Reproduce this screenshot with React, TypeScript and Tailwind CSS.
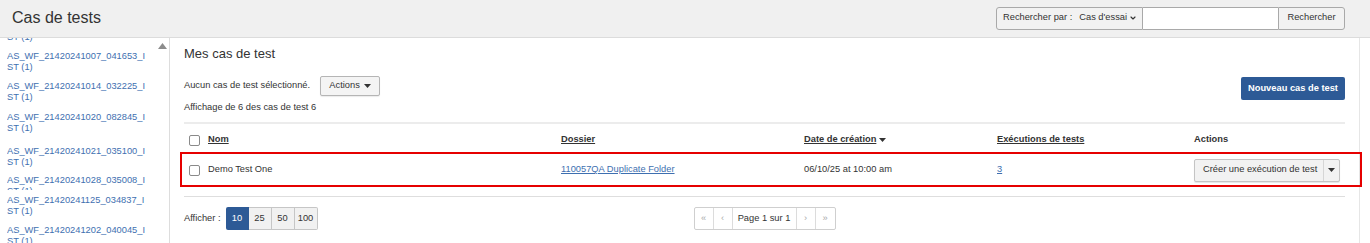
import { ChevronDown } from "lucide-react";

const folders = [
  { l1: "AS_WF_21420241007_041653_I", cls: "mt-[8px] h-[22px]" },
  { l1: "AS_WF_21420241014_032225_I", cls: "mt-[8px] h-[22px]" },
  { l1: "AS_WF_21420241020_082845_I", cls: "mt-[9px] h-[22px]" },
  { l1: "AS_WF_21420241021_035100_I", cls: "mt-[12px] h-[22px]" },
  { l1: "AS_WF_21420241028_035008_I", cls: "mt-[7px] h-[15px]" },
  { l1: "AS_WF_21420241125_034837_I", cls: "mt-[5px] h-[22px]" },
  { l1: "AS_WF_21420241202_040045_I", cls: "mt-[8px] h-[22px]" },
];

const Checkbox = () => (
  <span className="block w-[11px] h-[11px] border border-[#8a8a8a] rounded-[2px] bg-white" />
);

const Caret = () => (
  <svg width="7" height="4" viewBox="0 0 7 4" className="fill-[#333]">
    <path d="M0 0h7L3.5 4z" />
  </svg>
);

const App = () => {
  return (
    <div className="w-[1370px] h-[243px] overflow-hidden bg-white text-[#333] font-['Liberation_Sans',Arial,sans-serif] text-[9.3px]">
      <header className="h-[38px] bg-[#f0f0f0] border-b border-[#dcdcdc] flex items-center justify-between pl-[12px] pr-[25px]">
        <h1 className="text-[16px] leading-none text-[#333] -mt-[1px]">Cas de tests</h1>
        <div className="flex h-[23px] -mt-[1px]">
          <div className="flex items-center w-[147px] border border-[#a9a9a9] rounded-l-[3px] bg-[#f2f2f2] pl-[6px]">
            <span className="text-[#333]">Rechercher par :</span>
            <span className="ml-[7px] text-[#333]">Cas d'essai</span>
            <ChevronDown size={8} strokeWidth={3.5} className="ml-[2px] text-[#333]" />
          </div>
          <div className="w-[135px] border-y border-[#a9a9a9] bg-white" />
          <button className="w-[67px] border border-[#a9a9a9] rounded-r-[3px] bg-[#f2f2f2] text-[#333]">
            Rechercher
          </button>
        </div>
      </header>

      <div className="flex h-[205px]">
        <aside className="relative w-[170px] shrink-0 border-r border-[#dddddd] overflow-hidden pl-[7px]">
          <svg width="9" height="6" viewBox="0 0 9 6" className="absolute left-[158px] top-[5px] fill-[#8c8c8c]">
            <path d="M4.5 0L9 6H0z" />
          </svg>
          {/* previous entry, scrolled mostly out of view */}
          <div className="-mt-[6px] h-[11px] leading-[11px] text-[#3e6fb0]">ST (1)</div>
          {folders.map((f) => (
            <div key={f.l1} className={`${f.cls} overflow-hidden leading-[11px] text-[#3e6fb0]`}>
              <div>{f.l1}</div>
              <div>ST (1)</div>
            </div>
          ))}
        </aside>

        <main className="flex-1 border-r border-[#e6e6e6] mr-[10px] px-[14px] pt-[8px]">
          <div className="flex justify-between items-start">
            <div>
              <h2 className="text-[13px] leading-[16px] text-[#333]">Mes cas de test</h2>
              <div className="flex items-center mt-[14px] h-[20px]">
                <span>Aucun cas de test sélectionné.</span>
                <button className="ml-[10px] h-[20px] w-[60px] flex items-center justify-center gap-[4px] border border-[#b5b5b5] rounded-[2px] bg-[#f4f4f4] shadow-[0_1px_1px_rgba(0,0,0,0.08)]">
                  Actions
                  <Caret />
                </button>
              </div>
              <div className="mt-[6px] leading-[11px]">Affichage de 6 des cas de test 6</div>
            </div>
            <button className="mt-[31px] w-[104px] h-[23px] rounded-[2px] bg-[#2d5a96] text-white font-bold">
              Nouveau cas de test
            </button>
          </div>

          <div className="relative mt-[9px] border-t-2 border-[#ececec]">
            <div className="grid grid-cols-[24px_353px_243px_193px_197px_1fr] items-center h-[29px] pt-[4px] border-b border-[#eeeeee] font-bold">
              <div className="pl-[5px]"><Checkbox /></div>
              <div className="underline">Nom</div>
              <div className="underline">Dossier</div>
              <div className="flex items-center gap-[3px]">
                <span className="underline">Date de création</span>
                <Caret />
              </div>
              <div className="underline">Exécutions de tests</div>
              <div>Actions</div>
            </div>
            <div className="grid grid-cols-[24px_353px_243px_193px_197px_1fr] items-center h-[34px]">
              <div className="pl-[5px]"><Checkbox /></div>
              <div>Demo Test One</div>
              <div className="text-[#3e6fb0] underline">110057QA Duplicate Folder</div>
              <div>06/10/25 at 10:00 am</div>
              <div className="text-[#3e6fb0] underline">3</div>
              <div className="flex h-[23px] w-[146px] border border-[#c4c4c4] rounded-[2px] bg-[#f2f2f2] shadow-[0_1px_1px_rgba(0,0,0,0.1)]">
                <span className="flex-1 flex items-center pl-[8px]">Créer une exécution de test</span>
                <span className="w-[16px] flex items-center justify-center border-l border-[#d6d6d6]">
                  <Caret />
                </span>
              </div>
            </div>
            <div className="h-[10px] border-b border-[#dedede]" />
            <div className="absolute left-[-4px] right-[-17px] top-[28px] h-[35px] border-2 border-[#e60000]" />
          </div>

          <div className="grid grid-cols-[1fr_auto_1fr] items-center mt-[10px] h-[23px]">
            <div className="flex items-center h-full">
              <span className="mr-[5px]">Afficher :</span>
              <div className="flex h-full">
                <span className="w-[23px] flex items-center justify-center bg-[#2d5a96] text-white rounded-l-[2px]">10</span>
                {["25", "50", "100"].map((n, i) => (
                  <span
                    key={n}
                    className={`flex items-center justify-center border border-l-0 border-[#c6c6c6] bg-[#f1f1f1] ${
                      i === 2 ? "w-[23px] rounded-r-[2px]" : "w-[23px]"
                    }`}
                  >
                    {n}
                  </span>
                ))}
              </div>
            </div>
            <div className="flex h-full border border-[#cfcfcf] rounded-[2px] bg-white">
              <span className="w-[19px] flex items-center justify-center text-[#aaaaaa] border-r border-[#dcdcdc]">«</span>
              <span className="w-[19px] flex items-center justify-center text-[#aaaaaa] border-r border-[#dcdcdc]">‹</span>
              <span className="w-[64px] flex items-center justify-center border-r border-[#dcdcdc]">Page 1 sur 1</span>
              <span className="w-[19px] flex items-center justify-center text-[#aaaaaa] border-r border-[#dcdcdc]">›</span>
              <span className="w-[19px] flex items-center justify-center text-[#aaaaaa]">»</span>
            </div>
            <div />
          </div>
        </main>
      </div>
    </div>
  );
};

export default App;
